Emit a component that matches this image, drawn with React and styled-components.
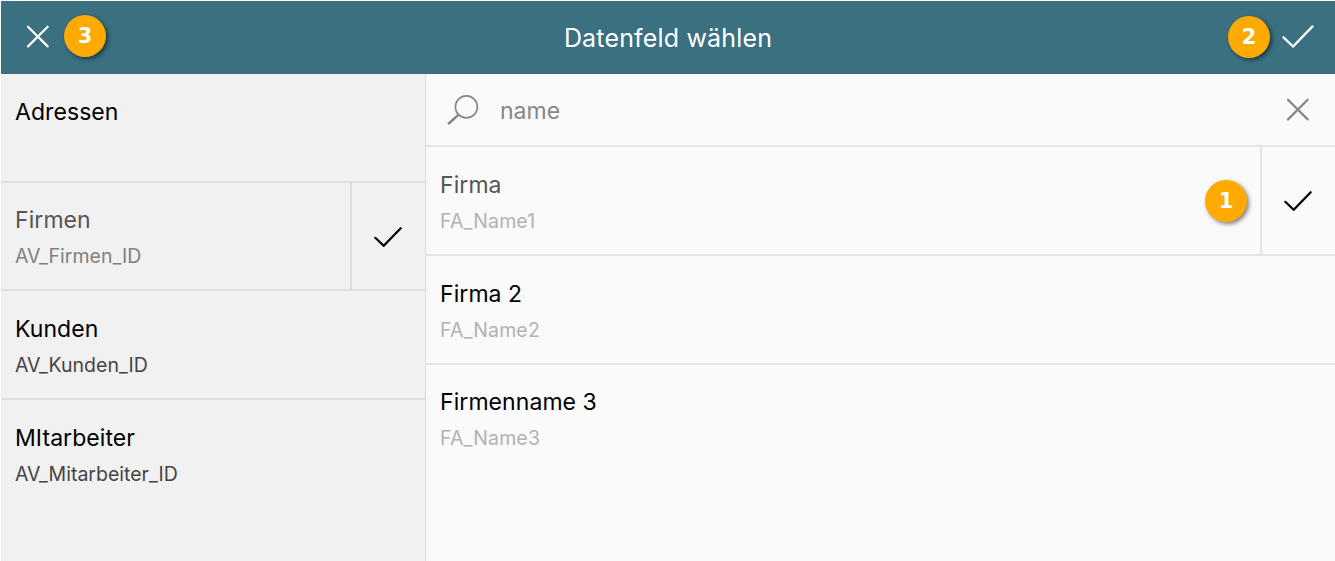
import React from 'react';
import styled, { createGlobalStyle } from 'styled-components';

const GlobalStyle = createGlobalStyle`
  *, *::before, *::after { box-sizing: border-box; }
  body { margin: 0; background: #fff; font-family: Inter, "Liberation Sans", sans-serif; font-optical-sizing: none; }
`;

const Dialog = styled.div`
  display: flex;
  flex-direction: column;
  height: 561px;
  padding: 1px 0 0 1px;
  overflow: hidden;
`;

const Header = styled.header`
  flex: none;
  display: grid;
  grid-template-columns: 1fr auto 1fr;
  align-items: center;
  height: 73px;
  padding: 0 21px 2px 25px;
  background: #3a7080;
  color: #fff;
`;

const Title = styled.h1`
  margin: 0;
  padding: 2px 4px 0 0;
  font-size: 25px;
  font-weight: 400;
  line-height: 30px;
  letter-spacing: 0.17px;
`;

const Actions = styled.div`
  display: flex;
  align-items: center;
  justify-content: ${(p) => (p.$end ? 'flex-end' : 'flex-start')};
  gap: ${(p) => (p.$end ? 12 : 14)}px;
`;

const Badge = styled.span`
  display: grid;
  place-items: center;
  width: 42px;
  height: 42px;
  margin-top: ${(p) => p.$shift || 0}px;
  border-radius: 50%;
  background: #ffaa00;
  box-shadow: 2px 2px 4px rgba(0, 0, 0, 0.5);
  color: #fff;
  font: bold 21px/24px "DejaVu Sans", sans-serif;
`;

const IconButton = styled.button`
  display: flex;
  padding: 0;
  border: 0;
  background: none;
  color: ${(p) => p.$color || 'inherit'};
`;

const Body = styled.div`
  flex: 1;
  display: flex;
`;

const Sidebar = styled.nav`
  width: 425px;
  border-right: 1px solid #dedede;
  background: #f1f1f1;
`;

const Content = styled.main`
  flex: 1;
  background: #fafafa;
`;

const SearchBar = styled.div`
  display: flex;
  align-items: center;
  height: 73px;
  padding: 0 25px 0 21px;
  border-bottom: 2px solid #e5e5e5;
`;

const SearchText = styled.span`
  flex: 1;
  padding: 2px 0 0 21px;
  color: #868686;
  font-size: 23px;
  line-height: 30px;
`;

const Row = styled.div`
  display: flex;
  height: ${(p) => p.$height || 109}px;
  border-bottom: ${(p) => (p.$last ? 0 : 2)}px solid ${(p) => p.$line || '#e5e5e5'};
`;

const RowText = styled.div`
  flex: 1;
  padding: ${(p) => p.$top || 23}px 0 0 14px;
`;

const Name = styled.div`
  color: ${(p) => (p.$selected ? '#555' : '#000')};
  font-size: 23px;
  line-height: 30px;
  letter-spacing: 0.07px;
`;

const Field = styled.div`
  margin-top: 8px;
  color: ${(p) => p.$color};
  font-size: 19.5px;
  line-height: 27px;
  letter-spacing: ${(p) => p.$spacing || 0}px;
`;

const BadgeSlot = styled.div`
  display: flex;
  align-items: center;
  padding-right: 13px;
`;

const CheckCell = styled.div`
  display: grid;
  place-items: center;
  width: ${(p) => p.$width}px;
  border-left: 2px solid ${(p) => p.$line || '#e5e5e5'};
  padding: 1px 2px 0 0;
`;

const Cross = () => (
  <svg width="24" height="24" viewBox="0 0 24 24" fill="none" stroke="currentColor" strokeWidth="2.2" strokeLinecap="round">
    <path d="M2 1.7 21.7 21.4M21.7 1.7 2 21.4" />
  </svg>
);

const Check = ({ width = 28, stroke = 2.2 }) => (
  <svg width={width} height={width * 20 / 28} viewBox="0 0 28 20" fill="none" stroke="currentColor" strokeWidth={stroke} strokeLinecap="round">
    <path d="M1.3 10.8 9.7 18.8 26.7 1.2" />
  </svg>
);

const Magnifier = () => (
  <svg width="32" height="32" viewBox="0 0 32 32" fill="none" stroke="currentColor" strokeLinecap="round">
    <circle cx="19.4" cy="12.9" r="11" strokeWidth="1.6" />
    <path d="M11.3 20.9 1.8 29.5" strokeWidth="2.5" />
  </svg>
);

const tables = [
  { name: 'Adressen', height: 109, top: 23 },
  { name: 'Firmen', field: 'AV_Firmen_ID', height: 108, top: 22, selected: true },
  { name: 'Kunden', field: 'AV_Kunden_ID', height: 109, top: 23 },
  { name: 'MItarbeiter', field: 'AV_Mitarbeiter_ID', height: 109, top: 23, last: true },
];

const fields = [
  { name: 'Firma', field: 'FA_Name1', selected: true },
  { name: 'Firma 2', field: 'FA_Name2' },
  { name: 'Firmenname 3', field: 'FA_Name3', top: 22, last: true },
];

export default function App() {
  return (
    <>
      <GlobalStyle />
      <Dialog>
        <Header>
          <Actions>
            <IconButton aria-label="Schließen"><Cross /></IconButton>
            <Badge $shift={-1}>3</Badge>
          </Actions>
          <Title>Datenfeld wählen</Title>
          <Actions $end>
            <Badge>2</Badge>
            <IconButton aria-label="Übernehmen"><Check width={32} stroke={2} /></IconButton>
          </Actions>
        </Header>
        <Body>
          <Sidebar>
            {tables.map((t) => (
              <Row key={t.name} $height={t.height} $last={t.last} $line="#dfdfdf">
                <RowText $top={t.top}>
                  <Name $selected={t.selected}>{t.name}</Name>
                  {t.field && <Field $color={t.selected ? '#808080' : '#444'}>{t.field}</Field>}
                </RowText>
                {t.selected && <CheckCell $width={75} $line="#dfdfdf"><Check /></CheckCell>}
              </Row>
            ))}
          </Sidebar>
          <Content>
            <SearchBar>
              <IconButton as="span" $color="#868686"><Magnifier /></IconButton>
              <SearchText>name</SearchText>
              <IconButton aria-label="Leeren" $color="#868686"><Cross /></IconButton>
            </SearchBar>
            {fields.map((f) => (
              <Row key={f.name} $last={f.last}>
                <RowText $top={f.top}>
                  <Name $selected={f.selected}>{f.name}</Name>
                  <Field $color="#b2b2b2" $spacing={0.15}>{f.field}</Field>
                </RowText>
                {f.selected && <BadgeSlot><Badge>1</Badge></BadgeSlot>}
                {f.selected && <CheckCell $width={75}><Check /></CheckCell>}
              </Row>
            ))}
          </Content>
        </Body>
      </Dialog>
    </>
  );
}
